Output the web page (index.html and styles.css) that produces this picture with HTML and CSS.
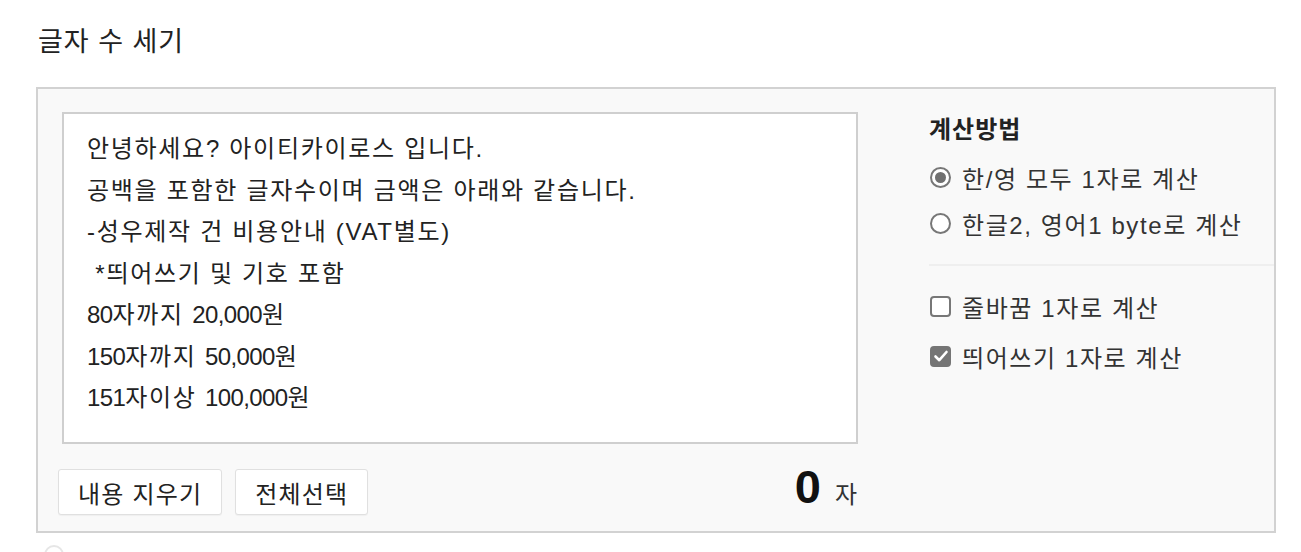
FILE: index.html
```html
<!DOCTYPE html>
<html lang="ko">
<head>
<meta charset="utf-8">
<title>글자 수 세기</title>
<link rel="stylesheet" href="styles.css">
</head>
<body>
<div class="page">
  <h1 class="title">글자 수 세기</h1>
  <div class="box">
    <div class="left">
      <div class="editor">
        <div class="line">안녕하세요? 아이티카이로스 입니다.</div>
        <div class="line">공백을 포함한 글자수이며 금액은 아래와 같습니다.</div>
        <div class="line">-성우제작 건 비용안내 (VAT별도)</div>
        <div class="line"> *띄어쓰기 및 기호 포함</div>
        <div class="line"><span class="d">80</span>자까지 <span class="d">20,000</span>원</div>
        <div class="line"><span class="d">150</span>자까지 <span class="d">50,000</span>원</div>
        <div class="line"><span class="d">151</span>자이상 <span class="d">100,000</span>원</div>
      </div>
      <div class="actions">
        <div class="buttons">
          <button class="btn" type="button">내용 지우기</button>
          <button class="btn" type="button">전체선택</button>
        </div>
        <div class="count"><span class="num">0</span><span class="unit">자</span></div>
      </div>
    </div>
    <div class="right">
      <div class="panel-title">계산방법</div>
      <div class="opt"><span class="radio on"></span><span class="label">한/영 모두 1자로 계산</span></div>
      <div class="opt"><span class="radio"></span><span class="label">한글2, 영어1 byte로 계산</span></div>
      <div class="sep"></div>
      <div class="opt chk"><span class="check"></span><span class="label">줄바꿈 1자로 계산</span></div>
      <div class="opt chk"><span class="check on"><svg viewBox="0 0 20 20" width="20" height="20"><path d="M4.5 10.5 L8.3 14.2 L15.5 6" fill="none" stroke="#fff" stroke-width="2.6" stroke-linecap="round" stroke-linejoin="round"/></svg></span><span class="label">띄어쓰기 1자로 계산</span></div>
    </div>
  </div>
  <div class="below"><span class="ring"></span></div>
</div>
</body>
</html>
```

FILE: styles.css
```css
html, body {
  margin: 0;
  padding: 0;
  background: #ffffff;
}
body {
  font-family: "Liberation Sans", "Noto Sans CJK KR", sans-serif;
  color: #222;
}
.page {
  padding-left: 36px;
  width: 1240px;
}
.title {
  margin: 24px 0 27px 2px;
  font-size: 27px;
  line-height: 36px;
  font-weight: normal;
  letter-spacing: 1px;
  color: #222;
}
.box {
  border: 2px solid #d2d2d2;
  background: #f9f9f9;
  display: flex;
  box-sizing: border-box;
  height: 446px;
  padding: 23px 0 0 24px;
}
.left {
  width: 796px;
  flex: none;
}
.editor {
  background: #fff;
  border: 2px solid #cfcfcf;
  height: 332px;
  box-sizing: border-box;
  padding: 14px 22px 0 23px;
  font-size: 24px;
  letter-spacing: 1.7px;
  line-height: 41.5px;
  color: #222;
}
.line {
  white-space: pre;
}
.d {
  letter-spacing: -0.6px;
}
.actions {
  display: flex;
  justify-content: space-between;
  align-items: flex-end;
  margin-top: 22px;
  margin-left: -4px;
}
.buttons {
  display: flex;
  gap: 13px;
}
.btn {
  height: 46px;
  padding: 0 19px;
  border: 1px solid #e0e0e0;
  border-radius: 3px;
  background: #fff;
  font-family: "Liberation Sans", "Noto Sans CJK KR", sans-serif;
  font-size: 24px;
  letter-spacing: 1.2px;
  color: #222;
  box-shadow: 0 1px 1px rgba(0,0,0,0.04);
}
.count {
  display: flex;
  align-items: baseline;
  margin-bottom: 5px;
  margin-right: 1px;
}
.num {
  font-size: 47px;
  font-weight: bold;
  color: #111;
  line-height: 42px;
}
.unit {
  font-size: 24px;
  color: #333;
  margin-left: 14px;
}
.right {
  flex: 1;
  margin-left: 71px;
  padding-top: 3px;
}
.panel-title {
  font-size: 24px;
  font-weight: bold;
  letter-spacing: 1px;
  line-height: 30px;
  color: #222;
  margin-bottom: 9px;
}
.opt {
  display: flex;
  align-items: center;
  height: 46px;
}
.opt.chk {
  height: 50px;
}
.label {
  font-size: 24px;
  letter-spacing: 1.6px;
  color: #333;
  margin-left: 11px;
}
.radio {
  width: 21px;
  height: 21px;
  box-sizing: border-box;
  border: 2px solid #777;
  border-radius: 50%;
  background: #fff;
  margin-left: 1px;
  display: flex;
  align-items: center;
  justify-content: center;
}
.radio.on::after {
  content: "";
  width: 11px;
  height: 11px;
  border-radius: 50%;
  background: #707070;
}
.sep {
  height: 2px;
  background: #efefef;
  margin: 18px 0 15px 0;
}
.check {
  width: 21px;
  height: 21px;
  box-sizing: border-box;
  border: 2px solid #777;
  border-radius: 4px;
  background: #fff;
  margin-left: 1px;
  display: flex;
  align-items: center;
  justify-content: center;
}
.check.on {
  background: #757575;
  border-color: #757575;
}
.check.on svg {
  flex: none;
}
.below {
  padding: 12px 0 0 8px;
  height: 20px;
  overflow: hidden;
}
.ring {
  display: block;
  width: 16px;
  height: 16px;
  border: 2px solid #e6e6e6;
  border-radius: 50%;
}
```
